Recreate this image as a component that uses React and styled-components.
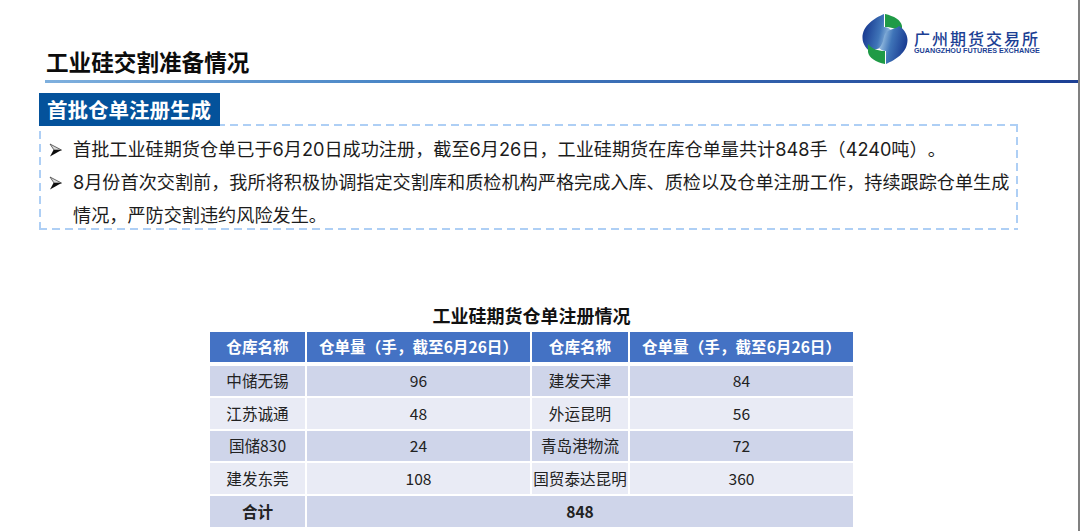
import React from 'react';
import styled, { createGlobalStyle } from 'styled-components';

const GlobalStyle = createGlobalStyle`
  html, body {
    margin: 0;
    padding: 0;
    background: #fff;
  }
  body {
    font-family: "Noto Sans CJK SC", "Liberation Sans", sans-serif;
    color: #111;
    text-spacing-trim: space-all;
  }
`;

const Slide = styled.div`
  width: 1080px;
  height: 531px;
  box-sizing: border-box;
  overflow: hidden;
  background: #fff;
  display: flex;
  flex-direction: column;
  border-right: 2px solid #808080;
`;

const Header = styled.div`
  height: 83px;
  box-sizing: border-box;
  margin-left: 45px;
  padding-left: 1px;
  padding-right: 38px;
  display: flex;
  justify-content: space-between;
  border-bottom: 3px solid;
  border-image: linear-gradient(90deg, #7fb0de 0%, #4a86c6 33%, #1c3f94 100%) 1;
`;

const Title = styled.h1`
  margin: 46px 0 0;
  font-size: 22.6px;
  line-height: 32px;
  font-weight: 700;
  color: #0c0c0c;
  white-space: nowrap;
`;

const Logo = styled.div`
  display: flex;
  align-items: flex-start;
  gap: 6px;
  margin-top: 13px;
`;

const LogoText = styled.div`
  display: flex;
  flex-direction: column;
  color: #1c3f94;
  margin-top: 16px;
`;

const LogoName = styled.div`
  font-size: 16px;
  line-height: 18px;
  letter-spacing: 2px;
  font-weight: 500;
  white-space: nowrap;
`;

const LogoLatin = styled.div`
  font-family: "Liberation Sans", sans-serif;
  font-size: 7.2px;
  line-height: 8px;
  font-weight: 700;
  white-space: nowrap;
`;

const Section = styled.section`
  margin: 10px 60px 0 39px;
`;

const Tab = styled.div`
  position: relative;
  width: 181px;
  height: 33px;
  box-sizing: border-box;
  background: #04529b;
  color: #fff;
  font-size: 20.5px;
  font-weight: 700;
  line-height: 33px;
  padding-left: 8px;
  white-space: nowrap;
`;

const NoteBox = styled.div`
  margin-top: -2px;
  height: 106px;
  box-sizing: border-box;
  padding: 9px 3px 0 10px;
  background:
    repeating-linear-gradient(270deg, #aecff5 0 8px, transparent 8px 13px) top / 100% 2px no-repeat,
    repeating-linear-gradient(90deg, #aecff5 0 8px, transparent 8px 13px) bottom / 100% 2px no-repeat,
    repeating-linear-gradient(0deg, #aecff5 0 8px, transparent 8px 13px) left / 2px 100% no-repeat,
    repeating-linear-gradient(180deg, #aecff5 0 8px, transparent 8px 13px) right / 2px 100% no-repeat;
`;

const Bullet = styled.div`
  display: flex;
  font-family: Inter, "Noto Sans CJK SC", sans-serif;
  font-size: 18.15px;
  line-height: 33.2px;
  color: #1c1c1c;
`;

const ArrowBox = styled.span`
  flex: 0 0 24px;
  display: flex;
  align-items: center;
  height: 33.2px;
`;

const TableBlock = styled.div`
  margin-left: 210px;
  width: 643px;
  margin-top: 72px;
`;

const TableTitle = styled.div`
  text-align: center;
  font-size: 18px;
  font-weight: 700;
  line-height: 26px;
  height: 30px;
  color: #111;
`;

const Grid = styled.div`
  display: grid;
  grid-template-columns: 95px 223px 96px 223px;
  grid-template-rows: 32px 30px 31px 30px 31px 31px;
  column-gap: 2px;
  row-gap: 2px;
`;

const Cell = styled.div`
  display: flex;
  align-items: center;
  justify-content: center;
  box-sizing: border-box;
  padding-bottom: 2px;
  font-size: 15.6px;
  white-space: nowrap;
  color: ${(p) => (p.$head ? '#fff' : '#222')};
  font-weight: ${(p) => (p.$head || p.$bold ? 700 : 400)};
  background: ${(p) => (p.$head ? '#4472c4' : p.$odd ? '#cfd5ea' : '#e9ebf5')};
  grid-column: ${(p) => p.$span || 'auto'};
  margin-bottom: ${(p) => (p.$head ? '2px' : '0')};
`;

const rows = [
  ['中储无锡', '96', '建发天津', '84'],
  ['江苏诚通', '48', '外运昆明', '56'],
  ['国储830', '24', '青岛港物流', '72'],
  ['建发东莞', '108', '国贸泰达昆明', '360'],
];

const heads = ['仓库名称', '仓单量（手，截至6月26日）', '仓库名称', '仓单量（手，截至6月26日）'];

const LogoLobe = () => (
  <>
    <path d="M22 1 C 13 5 0.5 12 0.5 25 C 0.5 31 5 37 9 39 C 13 35 19 37 23 31 C 25 27 24 22 29 17 C 27 15 25 14 22 14 Z" fill="url(#lobe)" />
    <path d="M23 1 C 32 3 39 7 40 13 L 40 21 C 36 16 30 14 23 14 Z" fill="#1f9a46" />
  </>
);

const LogoMark = () => (
  <svg width="46" height="52" viewBox="0 0 46 52">
    <defs>
      <linearGradient id="lobe" gradientUnits="userSpaceOnUse" x1="2" y1="22" x2="28" y2="28">
        <stop offset="0" stopColor="#1c3f94" />
        <stop offset="0.55" stopColor="#3f74b8" />
        <stop offset="1" stopColor="#a6cbe8" />
      </linearGradient>
    </defs>
    <LogoLobe />
    <g transform="rotate(180 23 26)">
      <LogoLobe />
    </g>
  </svg>
);

const BulletArrow = () => (
  <svg width="13" height="14" viewBox="0 0 13 14">
    <path d="M1 1 L12.5 7 L5 7 Z" fill="#d8d8d8" stroke="#444" strokeWidth="0.8" strokeLinejoin="round" />
    <path d="M1 13.5 L12.5 7 L4.5 7 Z" fill="#0c0c0c" />
  </svg>
);

export default function App() {
  return (
    <>
      <GlobalStyle />
      <Slide>
        <Header>
          <Title>工业硅交割准备情况</Title>
          <Logo>
            <LogoMark />
            <LogoText>
              <LogoName>广州期货交易所</LogoName>
              <LogoLatin>GUANGZHOU FUTURES EXCHANGE</LogoLatin>
            </LogoText>
          </Logo>
        </Header>
        <Section>
          <Tab>首批仓单注册生成</Tab>
          <NoteBox>
            <Bullet>
              <ArrowBox><BulletArrow /></ArrowBox>
              <span>首批工业硅期货仓单已于6月20日成功注册，截至6月26日，工业硅期货在库仓单量共计848手（4240吨）。</span>
            </Bullet>
            <Bullet>
              <ArrowBox><BulletArrow /></ArrowBox>
              <span>8月份首次交割前，我所将积极协调指定交割库和质检机构严格完成入库、质检以及仓单注册工作，持续跟踪仓单生成情况，严防交割违约风险发生。</span>
            </Bullet>
          </NoteBox>
        </Section>
        <TableBlock>
          <TableTitle>工业硅期货仓单注册情况</TableTitle>
          <Grid>
            {heads.map((h, i) => (
              <Cell key={i} $head>{h}</Cell>
            ))}
            {rows.map((row, r) =>
              row.map((c, i) => (
                <Cell key={`${r}-${i}`} $odd={r % 2 === 0}>{c}</Cell>
              ))
            )}
            <Cell $odd $bold>合计</Cell>
            <Cell $odd $bold $span="2 / 5">848</Cell>
          </Grid>
        </TableBlock>
      </Slide>
    </>
  );
}
